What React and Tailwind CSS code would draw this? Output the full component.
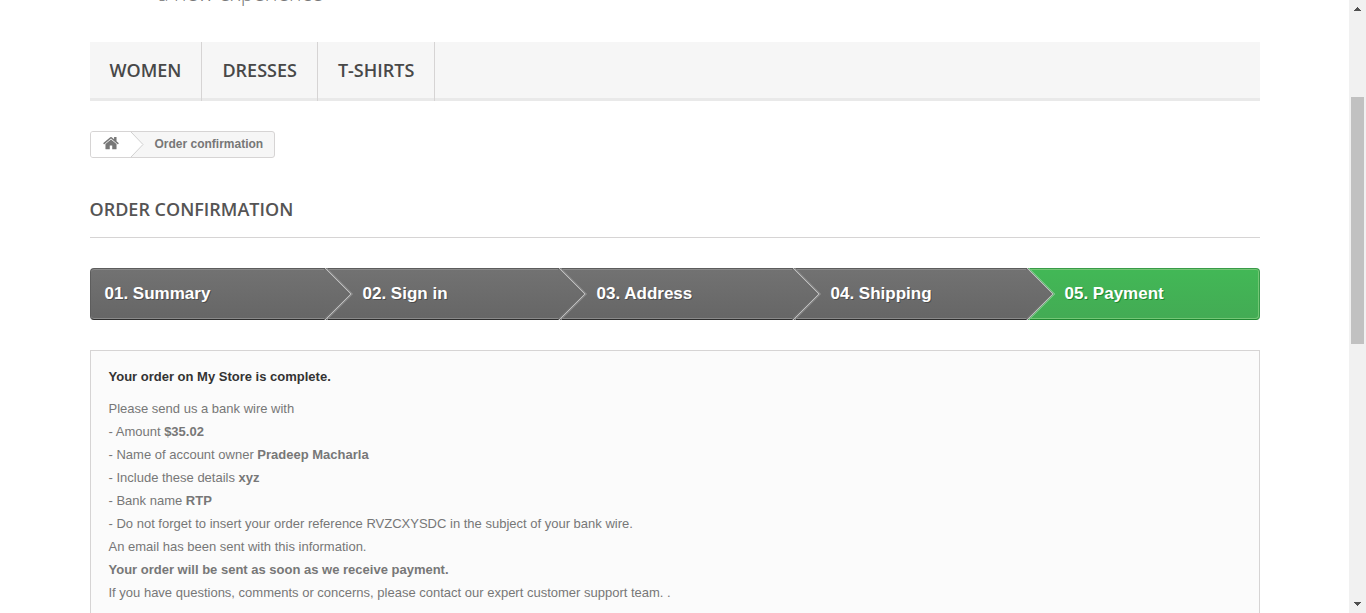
import React from "react";

const steps = ["01. Summary", "02. Sign in", "03. Address", "04. Shipping", "05. Payment"];

function StepArrow({ current }) {
  return (
    <svg className="absolute left-0 top-0 h-full w-[30px]" viewBox="0 0 30 52" fill="none" aria-hidden="true">
      <path d="M0 0H1L27 26L1 52H0Z" fill="url(#stepFill)" />
      <path d="M-1 0L25 26L-1 52" stroke="#838383" />
      <path d="M0 0L26 26L0 52" stroke="#444444" strokeWidth="1.2" />
      <path d="M1 0L27 26L1 52" stroke="#c0c0c0" strokeWidth="1.2" />
      <path d="M3 0L29 26L3 52" stroke={current ? "#74c683" : "#7f7f7f"} />
    </svg>
  );
}

function Step({ label, index }) {
  const current = index === steps.length - 1;
  const first = index === 0;
  const tone = current
    ? "rounded-r-sm border-r border-[#399b49] border-b-[#208931] bg-linear-to-b from-[#42b856] to-[#43ab54] shadow-[inset_0_1px_#74c776,inset_-1px_-1px_#74c776] [text-shadow:1px_1px_#208931]"
    : "border-[#5d5d5d] border-b-[#2e2e2e] bg-linear-to-b from-[#727272] to-[#666666] shadow-[inset_0_1px_#8a8a8a,inset_0_-1px_#8a8a8a] [text-shadow:1px_1px_rgba(0,0,0,0.3)]";
  return (
    <li
      aria-current={current ? "step" : undefined}
      className={`relative flex h-[52px] items-center border-y text-[17px] leading-[22px] font-bold text-white ${
        first ? "rounded-l-sm border-l pl-[14px]" : "pl-[39px]"
      } ${tone}`}
    >
      {!first && (
        <span className="absolute -inset-y-px left-0 w-[30px]">
          <StepArrow current={current} />
        </span>
      )}
      <span>{label}</span>
    </li>
  );
}

export default function App() {
  return (
    <div className="flex h-screen overflow-hidden bg-white font-['Liberation_Sans',Arial,sans-serif] text-[13px] leading-[23px] text-[#777777]">
      <svg className="absolute size-0" aria-hidden="true">
        <defs>
          <linearGradient id="stepFill" x1="0" y1="0" x2="0" y2="1">
            <stop offset="0" stopColor="#727272" />
            <stop offset="1" stopColor="#666666" />
          </linearGradient>
        </defs>
      </svg>
      <div className="min-w-0 flex-1 overflow-hidden">
        <div className="mx-auto max-w-[1170px]">
          <header>
            <div className="flex h-[42px] flex-col overflow-hidden">
              <p className="-mt-[21px] pl-[68px] font-['Open_Sans',sans-serif] text-[21px] leading-[28px] font-light">
                a new experience
              </p>
            </div>
            <nav className="flex h-[59px] border-b-[3px] border-[#e9e9e9] bg-[#f6f6f6] font-['Open_Sans',sans-serif] text-[18px] leading-[24px] font-semibold text-[#484848]">
              {["WOMEN", "DRESSES", "T-SHIRTS"].map((name) => (
                <a key={name} href="#" className="-mb-[3px] border-r border-[#d6d4d4] px-5 pt-[16px]">
                  {name}
                </a>
              ))}
            </nav>
          </header>
          <main>
            <nav aria-label="Breadcrumb" className="mt-[30px] flex">
              <div className="flex h-[27px] overflow-hidden rounded-[3px] border border-[#d6d4d4] bg-[#f6f6f6] text-[12px] leading-[24px] font-bold">
                <a href="#" aria-label="Home" className="flex w-[38px] items-center justify-end bg-white pr-[10px]">
                  <svg className="mb-[3px] h-[14px] w-4" viewBox="0 0 1664 1312" fill="#777777" aria-hidden="true">
                    <path d="M1408 768v480q0 26-19 45t-45 19H960V928H704v384H320q-26 0-45-19t-19-45V768q0-1 .5-3t.5-3l575-474 575 474q1 2 1 6zm223-69l-62 74q-8 9-21 11h-3q-13 0-21-7L832 200 140 777q-12 8-24 7-13-2-21-11l-62-74q-8-10-7-23.500t11-21.500L756 55q32-26 76-26t76 26l244 204V64q0-14 9-23t23-9h192q14 0 23 9t9 23v408l219 182q10 8 11 21.500t-7 23.500z" />
                  </svg>
                </a>
                <svg className="h-[25px] w-[15px]" viewBox="0 0 15 25" aria-hidden="true">
                  <path d="M0 0H2L14 12.500L2 25H0Z" fill="#fff" />
                  <path d="M2 0L14 12.500L2 25" fill="none" stroke="#d0d0d0" />
                </svg>
                <span className="pr-[11px] pl-[11px]">Order confirmation</span>
              </div>
            </nav>
            <h1 className="mt-[40px] mb-[30px] border-b border-[#d6d4d4] pb-[16px] font-['Open_Sans',sans-serif] text-[18px] leading-[23px] font-semibold text-[#555454]">
              ORDER CONFIRMATION
            </h1>
            <ol className="grid grid-cols-5">
              {steps.map((label, index) => (
                <Step key={label} label={label} index={index} />
              ))}
            </ol>
            <section className="mt-[30px] border border-[#d6d4d4] bg-[#fbfbfb] px-[18px] pt-[14px] pb-[17px]">
              <h2 className="mb-[9px] font-bold text-[#333333]">Your order on My Store is complete.</h2>
              <p>Please send us a bank wire with</p>
              <p>- Amount <strong>$35.02</strong></p>
              <p>- Name of account owner <strong>Pradeep Macharla</strong></p>
              <p>- Include these details <strong>xyz</strong></p>
              <p>- Bank name <strong>RTP</strong></p>
              <p>- Do not forget to insert your order reference RVZCXYSDC in the subject of your bank wire.</p>
              <p>An email has been sent with this information.</p>
              <p><strong>Your order will be sent as soon as we receive payment.</strong></p>
              <p>
                If you have questions, comments or concerns, please contact our{" "}
                <a href="#">expert customer support team.</a> .
              </p>
            </section>
          </main>
        </div>
      </div>
      <div className="flex w-[17px] shrink-0 flex-col items-center bg-[#f1f1f1]" aria-hidden="true">
        <svg className="h-[17px] w-[17px] shrink-0" viewBox="0 0 17 17" fill="#505050">
          <path d="M8 7h1v1h1v1h1v1h1v1H5v-1h1V9h1V8h1z" />
        </svg>
        <div className="mt-[80px] h-[247px] w-[13px] bg-[#c1c1c1]" />
        <svg className="mt-auto h-[17px] w-[17px] shrink-0" viewBox="0 0 17 17" fill="#505050">
          <path d="M5 6h7v1h-1v1h-1v1H9v1H8V9H7V8H6V7H5z" />
        </svg>
      </div>
    </div>
  );
}
